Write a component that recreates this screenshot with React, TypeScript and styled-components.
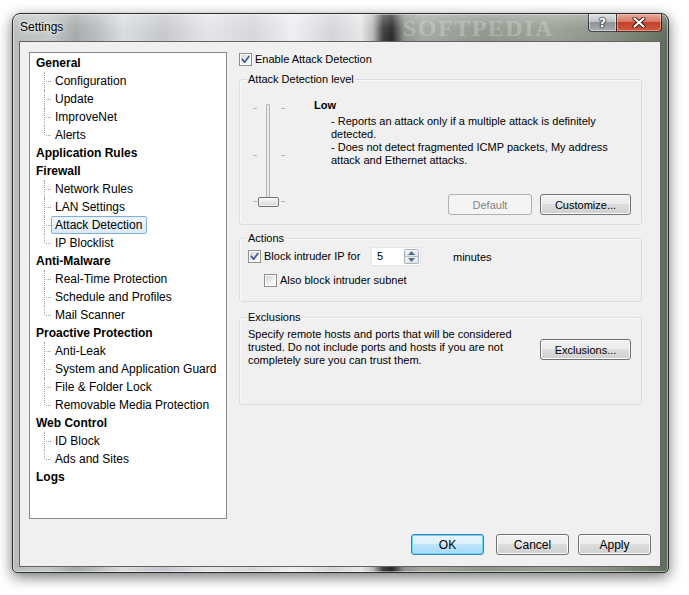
import React from 'react';
import styled, { createGlobalStyle, css } from 'styled-components';

const GlobalStyle = createGlobalStyle`
  html, body {
    margin: 0;
    padding: 0;
    background: #ffffff;
  }
  body {
    font-family: "Liberation Sans", Arial, sans-serif;
    font-size: 11px;
    color: #000000;
  }
  * {
    box-sizing: border-box;
  }
`;

const tree = [
  { name: 'General', items: ['Configuration', 'Update', 'ImproveNet', 'Alerts'] },
  { name: 'Application Rules', items: [] },
  { name: 'Firewall', items: ['Network Rules', 'LAN Settings', 'Attack Detection', 'IP Blocklist'] },
  { name: 'Anti-Malware', items: ['Real-Time Protection', 'Schedule and Profiles', 'Mail Scanner'] },
  {
    name: 'Proactive Protection',
    items: ['Anti-Leak', 'System and Application Guard', 'File & Folder Lock', 'Removable Media Protection'],
  },
  { name: 'Web Control', items: ['ID Block', 'Ads and Sites'] },
  { name: 'Logs', items: [] },
];

const selectedItem = 'Attack Detection';

const CheckMark = () => (
  <svg width="9" height="9" viewBox="0 0 9 9">
    <path d="M1.3 4.4 L3.6 7.2 L7.9 1.4" fill="none" stroke="#3f5a93" strokeWidth="1.7" strokeLinecap="round" strokeLinejoin="round" />
  </svg>
);

const Arrow = ({ up }: { up?: boolean }) => (
  <svg width="7" height="4" viewBox="0 0 7 4">
    <path d={up ? 'M0 4 L3.5 0 L7 4 Z' : 'M0 0 L3.5 4 L7 0 Z'} fill="#4d6a94" />
  </svg>
);

const CloseGlyph = () => (
  <svg width="14" height="11" viewBox="0 0 14 11">
    <path d="M2.5 1.5 L11.5 9.5 M11.5 1.5 L2.5 9.5" stroke="#3b1a14" strokeWidth="4" strokeLinecap="round" />
    <path d="M2.5 1.5 L11.5 9.5 M11.5 1.5 L2.5 9.5" stroke="#ffffff" strokeWidth="2.2" strokeLinecap="round" />
  </svg>
);

const CheckBox = ({ checked }: { checked?: boolean }) => <Box>{checked && <CheckMark />}</Box>;

const App = () => {
  return (
    <Page>
      <GlobalStyle />
      <Window>
        <TitleBar>
          <Title>Settings</Title>
          <Watermark>SOFTPEDIA</Watermark>
          <Caption>
            <HelpButton>?</HelpButton>
            <CloseButton>
              <CloseGlyph />
            </CloseButton>
          </Caption>
        </TitleBar>

        <Client>
          <MainRow>
            <Tree>
              {tree.map((section) => (
                <div key={section.name}>
                  <TreeParent>{section.name}</TreeParent>
                  {section.items.map((item, i) => (
                    <TreeChild key={item} $last={i === section.items.length - 1}>
                      <TreeLabel $selected={item === selectedItem}>{item}</TreeLabel>
                    </TreeChild>
                  ))}
                </div>
              ))}
            </Tree>

            <RightColumn>
              <CheckRow>
                <CheckBox checked />
                <CheckText>Enable Attack Detection</CheckText>
              </CheckRow>

              <GroupBox $height={146} $top={13}>
                <GroupLabel>Attack Detection level</GroupLabel>
                <LevelBody>
                  <Slider>
                    <TickColumn>
                      <Tick />
                      <Tick />
                      <Tick />
                    </TickColumn>
                    <Track />
                    <TickColumn>
                      <Tick />
                      <Tick />
                      <Tick />
                    </TickColumn>
                    <Thumb />
                  </Slider>
                  <LevelInfo>
                    <LevelName>Low</LevelName>
                    <LevelText>
                      - Reports an attack only if a multiple attack is definitely
                      <br />
                      detected.
                      <br />
                      - Does not detect fragmented ICMP packets, My address
                      <br />
                      attack and Ethernet attacks.
                    </LevelText>
                    <GroupButtons>
                      <Button $width={84} disabled>
                        Default
                      </Button>
                      <Button $width={91}>Customize...</Button>
                    </GroupButtons>
                  </LevelInfo>
                </LevelBody>
              </GroupBox>

              <GroupBox $height={64} $top={13}>
                <GroupLabel>Actions</GroupLabel>
                <ActionsBody>
                  <ActionRow>
                    <CheckRow $width={123}>
                      <CheckBox checked />
                      <CheckText>Block intruder IP for</CheckText>
                    </CheckRow>
                    <SpinBox>
                      <SpinValue>5</SpinValue>
                      <SpinButtons>
                        <SpinButton>
                          <Arrow up />
                        </SpinButton>
                        <SpinButton>
                          <Arrow />
                        </SpinButton>
                      </SpinButtons>
                    </SpinBox>
                    <Unit>minutes</Unit>
                  </ActionRow>
                  <SubRow>
                    <CheckBox />
                    <CheckText>Also block intruder subnet</CheckText>
                  </SubRow>
                </ActionsBody>
              </GroupBox>

              <GroupBox $height={88} $top={15}>
                <GroupLabel>Exclusions</GroupLabel>
                <ExclusionsBody>
                  <Note>
                    Specify remote hosts and ports that will be considered
                    <br />
                    trusted. Do not include ports and hosts if you are not
                    <br />
                    completely sure you can trust them.
                  </Note>
                  <SideButton $width={91}>Exclusions...</SideButton>
                </ExclusionsBody>
              </GroupBox>
            </RightColumn>
          </MainRow>

          <DialogButtons>
            <OkButton $width={73} $primary $size={12}>
              OK
            </OkButton>
            <Button $width={73} $size={12}>
              Cancel
            </Button>
            <Button $width={73} $size={12}>
              Apply
            </Button>
          </DialogButtons>
        </Client>
      </Window>
    </Page>
  );
};

export default App;

const Page = styled.div`
  width: 689px;
  height: 595px;
  padding: 13px 0 0 12px;
  overflow: hidden;
  background: #ffffff;
`;

const Window = styled.div`
  width: 657px;
  height: 560px;
  display: flex;
  flex-direction: column;
  padding: 0 7px 5px 6px;
  border: 1px solid #2b2e2c;
  border-radius: 8px 8px 5px 5px;
  background:
    linear-gradient(to bottom, rgba(255, 255, 255, 0.3) 0px, rgba(255, 255, 255, 0.06) 14px, rgba(255, 255, 255, 0) 28px),
    linear-gradient(
      to right,
      #b9bcbc 0px,
      #c4c7c7 35px,
      #a5a9a9 62px,
      #babdbf 85px,
      #d9dbde 110px,
      #c5c7cc 150px,
      #e4e4e8 195px,
      #d6d6db 240px,
      #efeff2 280px,
      #d3d4d8 320px,
      #e6e6e8 348px,
      #b8b8b8 360px,
      #3e3e3e 370px,
      #262626 379px,
      #8d918c 391px,
      #a3a7a0 410px,
      #8f958c 470px,
      #9aa096 540px,
      #8a9086 590px,
      #717c6c 630px,
      #5e6a5a 657px
    );
  box-shadow:
    0 4px 14px rgba(0, 0, 0, 0.55),
    inset 0 0 0 1px rgba(255, 255, 255, 0.45);
`;

const TitleBar = styled.div`
  position: relative;
  display: flex;
  align-items: flex-start;
  height: 27px;
  margin: 0 -7px 0 -6px;
  padding: 0 6px 0 7px;
  overflow: hidden;
`;

const Title = styled.span`
  position: relative;
  z-index: 1;
  font-size: 12px;
  line-height: 27px;
  color: #000000;
  text-shadow: 0 0 6px rgba(255, 255, 255, 0.9), 0 0 3px rgba(255, 255, 255, 0.8);
`;

const Watermark = styled.span`
  position: absolute;
  left: 390px;
  top: 1px;
  font-family: "Liberation Serif", "Times New Roman", serif;
  font-size: 24px;
  line-height: 26px;
  font-weight: bold;
  letter-spacing: 1.5px;
  color: rgba(255, 255, 255, 0.22);
`;

const Caption = styled.div`
  position: relative;
  z-index: 1;
  display: flex;
  margin-left: auto;
`;

const captionBase = css`
  height: 18px;
  display: flex;
  align-items: center;
  justify-content: center;
  border: 1px solid rgba(20, 20, 20, 0.75);
  border-top: none;
`;

const HelpButton = styled.div`
  ${captionBase};
  width: 28px;
  border-right: none;
  border-radius: 0 0 0 4px;
  font-family: "DejaVu Sans", sans-serif;
  font-size: 12px;
  font-weight: bold;
  color: #ffffff;
  text-shadow: 0 0 1px #222, 0 0 2px #222, 0 0 2px #222;
  background: linear-gradient(#dfe2e3 0%, #bfc4c6 45%, #8f9597 50%, #a7adaf 100%);
  box-shadow: inset 0 0 0 1px rgba(255, 255, 255, 0.45);
`;

const CloseButton = styled.div`
  ${captionBase};
  width: 46px;
  border-radius: 0 0 4px 0;
  background: linear-gradient(#e8aa9b 0%, #d77a66 45%, #c2412b 50%, #d35b3f 100%);
  box-shadow: inset 0 0 0 1px rgba(255, 220, 210, 0.45);
`;

const Client = styled.div`
  flex: 1;
  display: flex;
  flex-direction: column;
  padding: 10px 9px 11px 9px;
  background: #f0f0f0;
  border: 1px solid #5f645e;
`;

const MainRow = styled.div`
  display: flex;
  gap: 12px;
  height: 467px;
`;

const Tree = styled.div`
  width: 198px;
  height: 467px;
  flex-shrink: 0;
  padding-top: 1px;
  background: #ffffff;
  border: 1px solid #828790;
  font-size: 12px;
`;

const TreeParent = styled.div`
  height: 18px;
  line-height: 18px;
  padding-left: 6px;
  font-weight: bold;
  white-space: nowrap;
`;

const TreeChild = styled.div<{ $last: boolean }>`
  position: relative;
  display: flex;
  align-items: center;
  height: 18px;
  padding-left: 21px;

  &::before {
    content: '';
    position: absolute;
    left: 14px;
    top: 0;
    height: ${(p) => (p.$last ? '9px' : '18px')};
    border-left: 1px dotted #a0a0a0;
  }

  &::after {
    content: '';
    position: absolute;
    left: 16px;
    top: 9px;
    width: 5px;
    border-top: 1px dotted #a0a0a0;
  }
`;

const TreeLabel = styled.span<{ $selected?: boolean }>`
  height: 18px;
  line-height: 16px;
  padding: 0 4px 0 3px;
  border: 1px solid transparent;
  border-radius: 2px;
  white-space: nowrap;

  ${(p) =>
    p.$selected &&
    css`
      border-color: #7eaee3;
      background: linear-gradient(#f1f7fe, #dbeafb);
    `}
`;

const RightColumn = styled.div`
  width: 403px;
  display: flex;
  flex-direction: column;
  padding-top: 1px;
`;

const CheckRow = styled.div<{ $width?: number }>`
  display: flex;
  align-items: center;
  gap: 3px;
  height: 13px;
  ${(p) => p.$width && `width: ${p.$width}px; flex-shrink: 0;`}
`;

const Box = styled.span`
  width: 13px;
  height: 13px;
  flex-shrink: 0;
  display: flex;
  align-items: center;
  justify-content: center;
  border: 1px solid #8f8f8f;
  background: linear-gradient(135deg, #cdd1d6 0%, #eef0f2 60%, #fafafa 100%);
  box-shadow: inset 0 0 0 1px #fdfdfd;
`;

const CheckText = styled.span`
  font-size: 11px;
  line-height: 13px;
  white-space: nowrap;
`;

const GroupBox = styled.div<{ $height: number; $top: number }>`
  position: relative;
  height: ${(p) => p.$height}px;
  margin-top: ${(p) => p.$top}px;
  border: 1px solid #d5dfe5;
  border-radius: 3px;
  box-shadow: inset 1px 1px 0 #fbfbfb;
`;

const GroupLabel = styled.span`
  position: absolute;
  top: -7px;
  left: 7px;
  padding: 0 1px;
  font-size: 11px;
  line-height: 13px;
  background: #f0f0f0;
`;

const LevelBody = styled.div`
  display: flex;
  height: 100%;
  padding: 19px 10px 9px 12px;
`;

const Slider = styled.div`
  position: relative;
  display: flex;
  width: 35px;
  height: 104px;
  margin-top: 4px;
  padding-left: 1px;
  flex-shrink: 0;
`;

const TickColumn = styled.div`
  display: flex;
  flex-direction: column;
  justify-content: space-between;
  width: 4px;
  padding: 5px 0;
  margin-right: 9px;

  & + div + & {
    margin-left: 11px;
    margin-right: 0;
  }
`;

const Tick = styled.span`
  display: block;
  width: 4px;
  height: 1px;
  background: #b9b9b9;
`;

const Track = styled.div`
  width: 4px;
  height: 97px;
  margin-top: 1px;
  border: 1px solid #b5b5b5;
  border-radius: 1px;
  background: #e9e9e9;
`;

const Thumb = styled.div`
  position: absolute;
  left: 6px;
  top: 94px;
  width: 21px;
  height: 10px;
  border: 1px solid #707070;
  border-radius: 2px;
  background: linear-gradient(#f8f8f8 0%, #e8e8e8 50%, #d6d6d6 100%);
  box-shadow: inset 0 0 0 1px rgba(255, 255, 255, 0.7);
`;

const LevelInfo = styled.div`
  flex: 1;
  display: flex;
  flex-direction: column;
  margin-left: 27px;
`;

const LevelName = styled.div`
  font-size: 11px;
  font-weight: bold;
  line-height: 13px;
`;

const LevelText = styled.div`
  margin-top: 3px;
  padding-left: 17px;
  font-size: 11px;
  line-height: 13px;
  white-space: nowrap;
`;

const GroupButtons = styled.div`
  display: flex;
  justify-content: flex-end;
  gap: 8px;
  margin-top: auto;
`;

const Button = styled.button<{ $width: number; $primary?: boolean; $size?: number }>`
  width: ${(p) => p.$width}px;
  height: 21px;
  padding: 0;
  flex-shrink: 0;
  font-family: "Liberation Sans", Arial, sans-serif;
  font-size: ${(p) => p.$size ?? 11}px;
  color: #000000;
  border: 1px solid #707070;
  border-radius: 3px;
  background: linear-gradient(#f2f2f2 0%, #ebebeb 49%, #dddddd 50%, #cfcfcf 100%);
  box-shadow: inset 0 0 0 1px #fcfcfc;

  ${(p) =>
    p.$primary &&
    css`
      border-color: #3c7fb1;
      background: linear-gradient(#eaf6fd 0%, #d9f0fc 49%, #bee6fd 50%, #a7d9f5 100%);
      box-shadow: inset 0 0 0 1px #6fd6fb;
    `}

  &:disabled {
    color: #838383;
    border-color: #adb2b5;
    background: #f4f4f4;
    box-shadow: none;
  }
`;

const SideButton = styled(Button)`
  margin-left: auto;
  margin-top: 11px;
`;

const OkButton = styled(Button)`
  margin-right: 3px;
`;

const ActionsBody = styled.div`
  padding: 8px 0 0 8px;
`;

const ActionRow = styled.div`
  display: flex;
  align-items: center;
  height: 19px;
`;

const SubRow = styled(CheckRow)`
  margin-top: 8px;
  padding-left: 16px;
`;

const SpinBox = styled.div`
  display: flex;
  width: 50px;
  height: 19px;
  padding: 1px;
  background: #ffffff;
  border: 1px solid #e3e7eb;
`;

const SpinValue = styled.span`
  flex: 1;
  padding-left: 4px;
  font-size: 11px;
  line-height: 15px;
`;

const SpinButtons = styled.div`
  display: flex;
  flex-direction: column;
  width: 15px;
  border: 1px solid #a9b0b8;
  border-radius: 2px;
`;

const SpinButton = styled.div`
  flex: 1;
  display: flex;
  align-items: center;
  justify-content: center;
  background: linear-gradient(#f7f8f9, #dfe3e7);

  & + & {
    border-top: 1px solid #b8bec5;
  }
`;

const Unit = styled.span`
  margin-left: 32px;
  font-size: 11px;
`;

const ExclusionsBody = styled.div`
  display: flex;
  align-items: flex-start;
  padding: 10px 10px 0 8px;
`;

const Note = styled.div`
  font-size: 11px;
  line-height: 13px;
  white-space: nowrap;
`;

const DialogButtons = styled.div`
  display: flex;
  justify-content: flex-end;
  gap: 9px;
  margin-top: 15px;
`;
